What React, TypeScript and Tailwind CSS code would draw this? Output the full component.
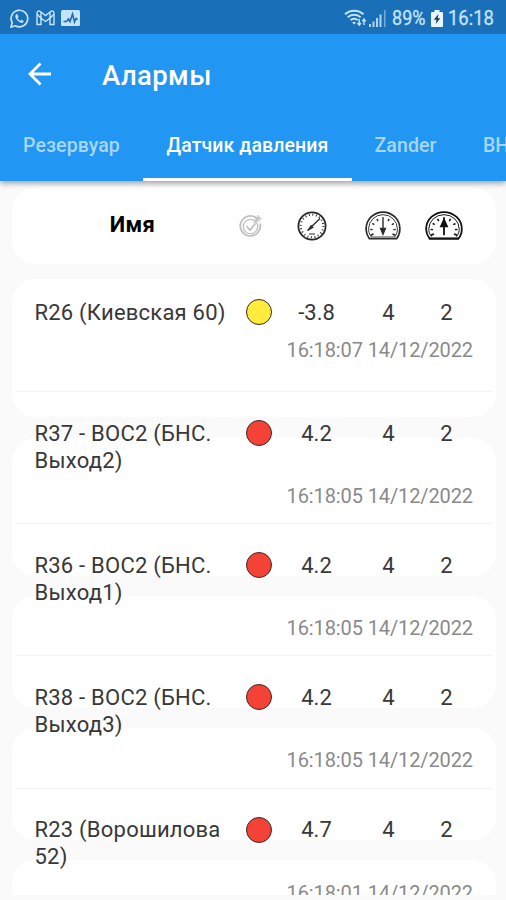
import { clsx } from "clsx";

interface Alarm {
  name: string;
  value: string;
  low: number;
  high: number;
  time: string;
  level: "warning" | "critical";
}

const alarms: Alarm[] = [
  { name: "R26 (Киевская 60)", value: "-3.8", low: 4, high: 2, time: "16:18:07 14/12/2022", level: "warning" },
  { name: "R37 - ВОС2 (БНС. Выход2)", value: "4.2", low: 4, high: 2, time: "16:18:05 14/12/2022", level: "critical" },
  { name: "R36 - ВОС2 (БНС. Выход1)", value: "4.2", low: 4, high: 2, time: "16:18:05 14/12/2022", level: "critical" },
  { name: "R38 - ВОС2 (БНС. Выход3)", value: "4.2", low: 4, high: 2, time: "16:18:05 14/12/2022", level: "critical" },
  { name: "R23 (Ворошилова 52)", value: "4.7", low: 4, high: 2, time: "16:18:01 14/12/2022", level: "critical" },
];

const tabs = [
  { label: "Резервуар", className: "w-[143px]" },
  { label: "Датчик давления", className: "w-[209px]" },
  { label: "Zander", className: "w-[107px]" },
  { label: "ВНС", className: "w-[87px]" },
];

const columns = "grid grid-cols-[200px_49px_66px_78px_38px]";

function StatusBar() {
  return (
    <div className="flex h-[34px] items-center bg-[#1a70b8] pt-[2px] pr-[11px] pl-[10px] text-[#c5e4fb]">
      <svg width="19" height="19" viewBox="0 0 19 19" fill="none" stroke="currentColor">
        <path d="M1 18l1.2-4.300a8.300 8.300 0 1 1 3.100 3.100z" strokeWidth="1.700" />
        <path d="M6.500 5.200c-2 1.600-.6 4.800 1.900 6.900 2.400 2 4.600 2 5.300.2l-2.200-1.300-1.100 1c-1.300-.5-2.300-1.500-2.900-2.800l.8-1.200-.9-2.500z" fill="currentColor" strokeWidth=".4" />
      </svg>
      <svg className="ml-[7px]" width="19" height="16" viewBox="0 0 19 16" fill="none" stroke="currentColor" strokeWidth="1.400">
        <path d="M1 14.500V3c0-2 2-2.500 3.300-1.500l5.200 4 5.200-4C16 .5 18 1 18 3v11.500h-4V8.200L9.500 11.500 5 8.200v6.300z" />
        <path d="M1 4l4 4.200V2M18 4l-4 4.200V2" />
      </svg>
      <svg className="ml-[6px]" width="19" height="16" viewBox="0 0 19 16">
        <rect width="19" height="16" rx="1.500" fill="currentColor" />
        <path d="M2.500 11.500h3l2-2.500 1.500 2.500L11.500 4l2 8 1.500-3.500 1.500 1" fill="none" stroke="#1a70b8" strokeWidth="1.600" />
      </svg>
      <div className="flex-1" />
      <svg width="23" height="18" viewBox="0 0 23 18" fill="none" stroke="currentColor" strokeWidth="1.900">
        <path d="M1 5.300c5-4.800 13.500-4.800 18.500 0M3.700 8.300c3.600-3.400 9.300-3.400 12.900 0M6.500 11.200c2-2 5.300-2 7.300 0" />
        <path d="M8.200 13.500l2 2 1.600-1.600a2.300 2.300 0 0 0-3.600-.4z" fill="currentColor" stroke="none" />
        <path d="M15.200 10v6M13.500 14l1.700 2.200L17 14M20 16v-5.500M18.300 12.300L20 10l1.700 2.300" strokeWidth="1.400" />
      </svg>
      <svg className="ml-[2px]" width="17" height="17" viewBox="0 0 17 17" fill="currentColor">
        <path d="M0 14h2v3H0zM3.500 11.500h2V17h-2zM7 8h2v9H7zM10.500 4.500h2V17h-2z" opacity=".85" />
        <path d="M15 0h1.500v17H15z" opacity=".5" />
      </svg>
      <span className="ml-[6px] w-[34px] origin-left scale-x-[0.88] text-[20.500px] leading-none whitespace-nowrap [-webkit-text-stroke:0.300px_currentColor]">89%</span>
      <svg className="ml-[5px]" width="12" height="17" viewBox="0 0 12 17">
        <path d="M3.500 0h5v2H11q1 0 1 1v13q0 1-1 1H1q-1 0-1-1V3q0-1 1-1h2.500z" fill="#eaf6ff" />
        <path d="M7.500 4L2.800 9.800h2.700L4.700 14l4.600-5.800H6.700z" fill="#173d5c" />
      </svg>
      <span className="ml-[5px] w-[47px] origin-left scale-x-[0.9] text-[20.500px] leading-none whitespace-nowrap [-webkit-text-stroke:0.300px_currentColor]">16:18</span>
    </div>
  );
}

function TargetIcon() {
  return (
    <svg width="26" height="26" viewBox="0 0 26 26" fill="none" stroke="#c0c0c0">
      <path d="M19.500 6A10 10 0 1 0 22 10.500" strokeWidth="1.800" />
      <circle cx="12.500" cy="13.500" r="7.200" strokeWidth="1.300" />
      <path d="M8.500 13l3.500 4L17.500 10.500" strokeWidth="1.800" />
      <path d="M16 10l6-6M20 2v4h4M18 4v4h4" strokeWidth="1.200" />
    </svg>
  );
}

function GaugeIcon() {
  return (
    <svg width="30" height="30" viewBox="0 0 30 30" fill="none" stroke="#292929">
      <circle cx="15" cy="15" r="13.600" strokeWidth="1.800" />
      <circle cx="15" cy="15" r="11.300" strokeWidth="2" strokeDasharray="1 2.550" />
      <path d="M10.500 19.500L23 7.500" strokeWidth="1.300" />
      <path d="M11 19.500l3-5.500 2.500 2.500z" fill="#292929" strokeWidth=".5" />
      <path d="M12 23h6" strokeWidth="1.800" stroke="#888" />
    </svg>
  );
}

function LimitIcon({ up }: { up?: boolean }) {
  return (
    <svg
      width={up ? 38 : 36}
      height="29"
      viewBox="0 0 38 30"
      preserveAspectRatio="none"
      fill="none"
      stroke={up ? "#111111" : "#2b2b2b"}
    >
      <path d="M4.500 28.500C2 25 1 22 1.200 18.500a17.800 17.400 0 0 1 35.600 0c0 3.500-1 7-3.300 10z" strokeWidth="1.800" />
      <path d="M6.500 26.500C4.200 23.500 3.800 21 3.800 18.500a15.200 14.700 0 0 1 30.400 0c0 2.500-.4 5-2.700 8" strokeWidth="1" />
      <path d="M6.800 20a12.200 12.200 0 0 1 24.400 0" strokeWidth="2.500" strokeDasharray="1.600 4.500" />
      <path d="M6 25l3-1.200M32 25l-3-1.200" strokeWidth="1.800" />
      <path d={up ? "M4 28.500h30" : "M6 26.800h26"} strokeWidth={up ? 2 : 0.8} />
      {up ? (
        <path d="M19 25V11M16 16l3-7 3 7z" fill="#111111" strokeWidth="1.800" />
      ) : (
        <path d="M19 9v13M16.500 18l2.500 6 2.500-6z" fill="#2b2b2b" strokeWidth="1.500" />
      )}
    </svg>
  );
}

// White plates behind the list, their rhythm is independent from the rows
function ListPlates() {
  return (
    <div className="col-start-1 row-start-1 mr-[10px] ml-3 flex flex-col">
      <div className="h-[138px] shrink-0 rounded-[24px] bg-white" />
      <div className="mt-[21px] h-[138px] shrink-0 rounded-[24px] bg-white" />
      <div className="mt-[20px] h-[112px] shrink-0 rounded-[24px] bg-white" />
      <div className="mt-[20px] h-[112px] shrink-0 rounded-[24px] bg-white" />
      <div className="mt-[20px] h-[112px] shrink-0 rounded-[24px] bg-white" />
    </div>
  );
}

function AlarmRow({ alarm, first }: { alarm: Alarm; first: boolean }) {
  return (
    <div
      className={clsx(
        "mr-[14px] ml-4 shrink-0 border-b border-[#f4f4f4] pl-[18.500px] text-[22px] leading-[27px] text-[#383838]",
        first ? "h-[113px] pt-[19.500px]" : "h-[132.200px] pt-[27.500px]"
      )}
    >
      <div className={clsx(columns, first ? "h-[27px]" : "h-[54px]")}>
        <span className="tracking-[0.220px]">{alarm.name}</span>
        <span className="flex h-[27px] items-center justify-center">
          <span
            className={clsx(
              "size-[26px] rounded-full border-[1.500px] border-[#3a2a24]",
              alarm.level === "warning" ? "bg-[#ffeb3b]" : "bg-[#f44336]"
            )}
          />
        </span>
        <span className="text-center">{alarm.value}</span>
        <span className="text-center">{alarm.low}</span>
        <span className="text-center">{alarm.high}</span>
      </div>
      <div
        className={clsx(
          "pr-[19px] text-right text-[20px] leading-[24px] tracking-[-0.110px] text-[#8a8a8a]",
          first ? "mt-[12px]" : "mt-[10.500px]"
        )}
      >
        {alarm.time}
      </div>
    </div>
  );
}

export default function App() {
  return (
    <div className="flex h-[900px] w-[506px] flex-col overflow-hidden bg-[#fafafa] font-['Roboto',sans-serif]">
      <header className="z-10 h-[181px] shrink-0 bg-[#2196f3] text-white shadow-[0_2px_6px_rgba(0,0,0,0.4)]">
        <StatusBar />
        <div className="flex h-[81px] items-center pl-[28px]">
          <svg className="mb-[2px]" width="24" height="24" viewBox="0 0 24 24" fill="none" stroke="white" strokeWidth="2.800">
            <path d="M12.500 1.500L2 12l10.500 10.500M2 12h21" />
          </svg>
          <h1 className="mt-[2px] ml-[50px] text-[27.500px] font-medium tracking-[0.400px]">Алармы</h1>
        </div>
        <nav className="flex h-[66px]">
          {tabs.map((tab, i) => (
            <div
              key={tab.label}
              className={clsx(
                "flex shrink-0 items-center justify-center border-b-[3px] pb-px text-[19.500px] font-medium tracking-[0.100px] whitespace-nowrap",
                tab.className,
                i === 1 ? "border-white text-white" : "border-transparent text-[#a8d7fb]"
              )}
            >
              {tab.label}
            </div>
          ))}
        </nav>
      </header>

      <div className="mt-[6px] mr-[10px] ml-3 flex h-[77px] shrink-0 items-center rounded-[24px] bg-white">
        <h2 className="w-[226px] pb-[2px] pl-[15px] text-center text-[22px] font-bold tracking-[0.400px] text-black">Имя</h2>
        <TargetIcon />
        <div className="w-[32.500px]" />
        <GaugeIcon />
        <div className="w-[38px]" />
        <LimitIcon />
        <div className="w-[24.500px]" />
        <LimitIcon up />
      </div>

      <main className="mt-[15px] mb-[5px] grid min-h-0 flex-1 grid-rows-[100%] overflow-hidden">
        <ListPlates />
        <div className="z-[1] col-start-1 row-start-1 flex flex-col">
          {alarms.map((alarm, i) => (
            <AlarmRow key={alarm.name} alarm={alarm} first={i === 0} />
          ))}
        </div>
      </main>
    </div>
  );
}
